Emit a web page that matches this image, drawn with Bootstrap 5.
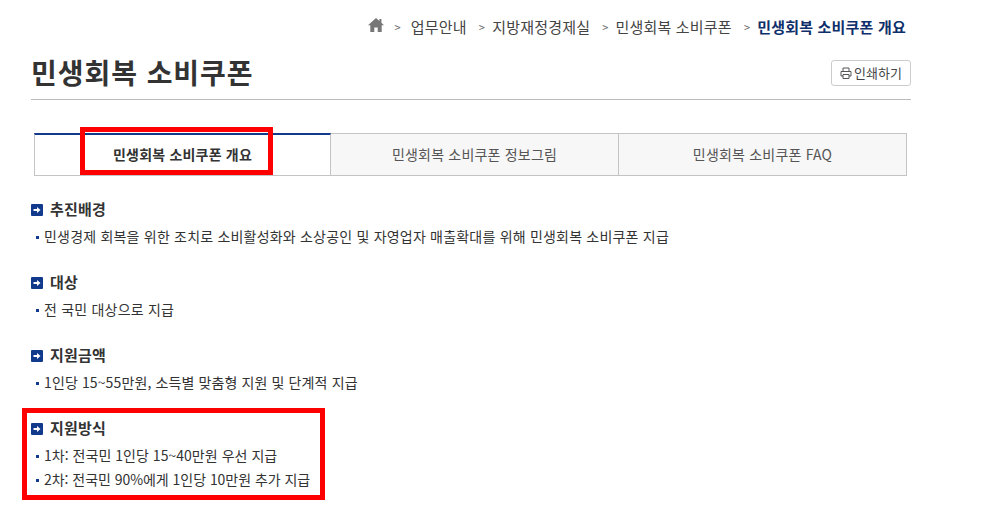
<!DOCTYPE html>
<html lang="ko">
<head>
<meta charset="utf-8">
<title>민생회복 소비쿠폰</title>
<link href="https://cdn.jsdelivr.net/npm/bootstrap@5.3.0/dist/css/bootstrap.min.css" rel="stylesheet">
<style>
html,body{height:506px;overflow:hidden;background:#fff}
body{font-family:"Noto Sans CJK KR","Liberation Sans",sans-serif;color:#333;font-size:14px;letter-spacing:.2px}
.page-wrap{width:880px;margin-left:31px;position:relative;height:506px}
.crumbs{height:54px;padding:17px 5px 0 0;font-size:15px;line-height:20px;color:#444}
.crumbs .sep{color:#666;font-size:11px;margin:0 7px 0 12px}
.crumbs .sep.first{margin-left:11px;margin-right:10px}
.crumbs .home-ico{margin-top:1px}
.crumbs b{color:#0f2f6b;font-weight:700}
.title-row{height:46px;border-bottom:1px solid #bbb;padding-bottom:7px}
.title-row h1{font-size:28px;font-weight:700;margin:0 0 2px;color:#333;line-height:36px;letter-spacing:.95px}
.print-btn{width:80px;height:26px;padding:0;font-size:13px;border:1px solid #ccc;border-radius:3px;color:#444;background:#fff;margin-bottom:6px;gap:2px;letter-spacing:0}
.tab-row{margin:33px 0 0 3px;width:873px;height:43px;font-size:14px}
.tab-cell{border:1px solid #c4c4c4;border-left:0;background:#f7f7f7;color:#555;height:43px;display:flex;align-items:center;justify-content:center;padding-bottom:1px}
.tab-cell.on{flex:0 0 297px;background:#fff;border-left:1px solid #c4c4c4;border-top:2px solid #123a8c;color:#333;font-weight:700}
.tab-cell.mid{flex:0 0 288px}
.tab-cell.end{flex:0 0 288px}
.sect{height:73px}
.sect-h{display:flex;align-items:center;gap:7px;font-size:15px;font-weight:700;line-height:20px;margin:0 0 5px;color:#333}
.sq{width:12px;height:12px;flex:none;display:block;margin-top:1px}
.items{list-style:none;padding:0;margin:0;font-size:14px;line-height:24px;color:#333}
.items li{padding-left:13px;position:relative;height:24px}
.items li.tight{letter-spacing:.03px}
.items li.mid-track{letter-spacing:.12px}
.items li.tighter{letter-spacing:-.04px}
.items li::before{content:"";position:absolute;left:5px;top:12px;width:3px;height:3px;background:#123a8c}
.sect-wrap{margin-top:23px}
.redbox{position:absolute;border:5px solid #f00;pointer-events:none}
.rb1{left:49px;top:127px;width:193px;height:48px}
.rb2{left:-9px;top:408px;width:303px;height:92px}
</style>
</head>
<body>
<div class="page-wrap">
  <nav class="crumbs d-flex justify-content-end align-items-start">
    <svg class="home-ico" width="16" height="14" viewBox="0 0 16 14"><path fill="#777" d="M8 0 0 7.2h2.3V14h4V9.5h3.4V14h4V7.2H16l-2.6-2.4V1h-2v1.9z"/></svg>
    <span class="sep first">&gt;</span><span>업무안내</span>
    <span class="sep">&gt;</span><span>지방재정경제실</span>
    <span class="sep">&gt;</span><span>민생회복 소비쿠폰</span>
    <span class="sep">&gt;</span><b>민생회복 소비쿠폰 개요</b>
  </nav>
  <div class="title-row d-flex justify-content-between align-items-end">
    <h1>민생회복 소비쿠폰</h1>
    <button type="button" class="btn print-btn d-flex align-items-center justify-content-center">
      <svg width="12" height="12" viewBox="0 0 12 12" fill="none" stroke="#555" stroke-width="1"><path d="M3 4V1h6v3M3 9H1V4.5h10V9H9"/><path d="M3 7.5h6v4H3z"/></svg>
      <span>인쇄하기</span>
    </button>
  </div>
  <div class="tab-row d-flex">
    <div class="tab-cell on">민생회복 소비쿠폰 개요</div>
    <div class="tab-cell mid">민생회복 소비쿠폰 정보그림</div>
    <div class="tab-cell end">민생회복 소비쿠폰 FAQ</div>
  </div>
  <div class="sect-wrap">
    <section class="sect">
      <h2 class="sect-h"><svg class="sq" viewBox="0 0 12 12"><rect width="12" height="12" rx="1" fill="#123a8c"/><path fill="#fff" d="M2.5 5h3.5V3l3.5 3L6 9V7H2.5z"/></svg>추진배경</h2>
      <ul class="items"><li>민생경제 회복을 위한 조치로 소비활성화와 소상공인 및 자영업자 매출확대를 위해 민생회복 소비쿠폰 지급</li></ul>
    </section>
    <section class="sect">
      <h2 class="sect-h"><svg class="sq" viewBox="0 0 12 12"><rect width="12" height="12" rx="1" fill="#123a8c"/><path fill="#fff" d="M2.5 5h3.5V3l3.5 3L6 9V7H2.5z"/></svg>대상</h2>
      <ul class="items"><li>전 국민 대상으로 지급</li></ul>
    </section>
    <section class="sect">
      <h2 class="sect-h"><svg class="sq" viewBox="0 0 12 12"><rect width="12" height="12" rx="1" fill="#123a8c"/><path fill="#fff" d="M2.5 5h3.5V3l3.5 3L6 9V7H2.5z"/></svg>지원금액</h2>
      <ul class="items"><li class="mid-track">1인당 15~55만원, 소득별 맞춤형 지원 및 단계적 지급</li></ul>
    </section>
    <section class="sect">
      <h2 class="sect-h"><svg class="sq" viewBox="0 0 12 12"><rect width="12" height="12" rx="1" fill="#123a8c"/><path fill="#fff" d="M2.5 5h3.5V3l3.5 3L6 9V7H2.5z"/></svg>지원방식</h2>
      <ul class="items"><li class="tight">1차: 전국민 1인당 15~40만원 우선 지급</li><li class="tighter">2차: 전국민 90%에게 1인당 10만원 추가 지급</li></ul>
    </section>
  </div>
  <div class="redbox rb1"></div>
  <div class="redbox rb2"></div>
</div>
</body>
</html>
